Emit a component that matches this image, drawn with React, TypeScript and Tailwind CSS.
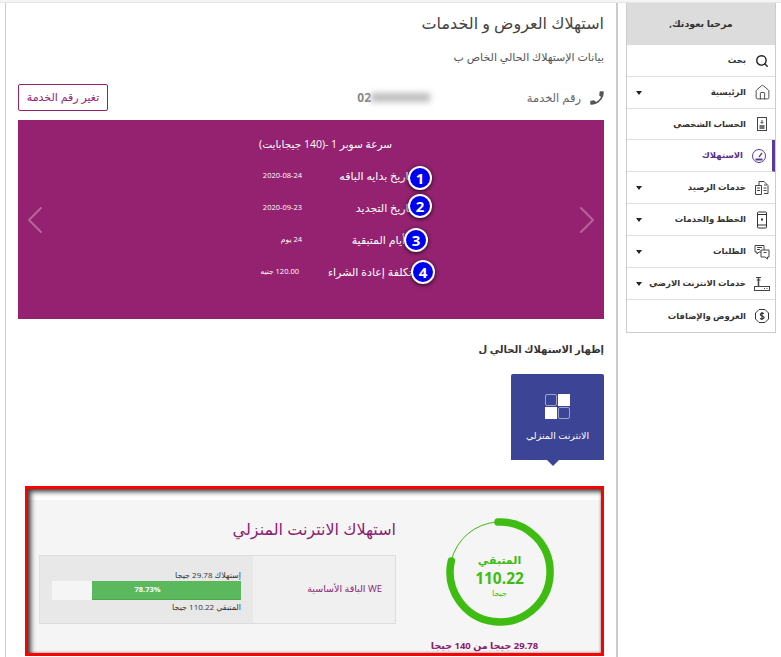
import { ChevronLeft, ChevronRight, House, Search } from 'lucide-react'
import type { ReactNode } from 'react'

const Caret = () => (
  <span className="mr-auto h-0 w-0 border-x-[3.5px] border-t-[4px] border-x-transparent border-t-[#222]" />
)

const ProfileIcon = () => (
  <svg width="14" height="16" viewBox="0 0 14 16" fill="none" stroke="#444">
    <rect x="2.500" y="1.500" width="9" height="13" />
    <path d="M7 4v3M5.500 6 7 7.500 8.500 6" />
    <path d="M4.500 10h5M4.500 12h5" strokeWidth="1.500" />
  </svg>
)

const GaugeIcon = () => (
  <svg width="16" height="16" viewBox="0 0 16 16" fill="none" stroke="#5b3a99">
    <circle cx="8" cy="8" r="6.500" />
    <path d="M8 9 11 5" strokeWidth="1.300" />
    <path d="M4.500 11.500h7" strokeWidth="2" />
  </svg>
)

const BalanceIcon = () => (
  <svg width="16" height="16" viewBox="0 0 16 16" fill="none" stroke="#444">
    <path d="M1.500 5.500h6v9h-6z" />
    <path d="M5 5V1.500h5l4 4v8h-4" />
    <path d="M3 8h3M3 10.500h3M10 5h3M9.500 8h3M9.500 10.500h3" />
  </svg>
)

const PhoneIcon = () => (
  <svg width="12" height="18" viewBox="0 0 12 18" fill="none" stroke="#333">
    <rect x="1.500" y="1" width="9" height="16" rx="1" />
    <path d="M1.500 3.500h9M1.500 14h9" />
    <rect x="5" y="7.500" width="2" height="2" fill="#333" stroke="none" />
  </svg>
)

const ChatIcon = () => (
  <svg width="16" height="16" viewBox="0 0 16 16" fill="none" stroke="#444">
    <path d="M1 1.500h9v6.500H5L3 10V8H1z" />
    <path d="M7 6h8v7h-1.500v2L11 13H7z" fill="white" />
    <path d="M3 3.500h5M3 5.500h3M9.500 8.500h3" />
  </svg>
)

const RouterIcon = () => (
  <svg width="16" height="16" viewBox="0 0 16 16" fill="none" stroke="#444">
    <rect x="0.500" y="10.500" width="15" height="4" />
    <path d="M4.500 2v8" strokeWidth="1.500" />
    <path d="M2 1.500h5M2.500 4h4" />
    <path d="M10 12.500h1M12.500 12.500h1" />
  </svg>
)

const OffersIcon = () => (
  <svg width="16" height="16" viewBox="0 0 16 16" fill="none" stroke="#333">
    <path d="M5 1.500h6L14.500 5v6L11 14.500H5L1.500 11V5z" />
    <path d="M10 5.500C8 4.500 6 5.500 6.500 7c.5 1 3 1 3.500 2.200C10.300 10.700 8 11.500 6 10.500M8 4v8" strokeWidth="1.200" />
  </svg>
)

const menu: { label: string; icon: ReactNode; caret?: boolean; active?: boolean; h: string }[] = [
  { label: 'بحث', icon: <Search size={14} strokeWidth={2.400} className="text-[#222]" />, h: 'h-[32px]' },
  { label: 'الرئيسية', icon: <House size={17} strokeWidth={1.200} className="text-[#333]" />, caret: true, h: 'h-[32px]' },
  { label: 'الحساب الشخصي', icon: <ProfileIcon />, h: 'h-[31px]' },
  { label: 'الاستهلاك', icon: <GaugeIcon />, active: true, h: 'h-[32px]' },
  { label: 'خدمات الرصيد', icon: <BalanceIcon />, caret: true, h: 'h-[32px]' },
  { label: 'الخطط والخدمات', icon: <PhoneIcon />, caret: true, h: 'h-[32px]' },
  { label: 'الطلبات', icon: <ChatIcon />, caret: true, h: 'h-[32px]' },
  { label: 'خدمات الانترنت الارضي', icon: <RouterIcon />, caret: true, h: 'h-[32px]' },
  { label: 'العروض والإضافات', icon: <OffersIcon />, h: 'h-[32px]' },
]

const bundleRows = [
  { label: 'تاريخ بدايه الباقه', labelClass: '', value: '2020-08-24', valueClass: 'mr-[2px]', badge: 1, badgeClass: 'right-[-20px] top-[6px]' },
  { label: 'تاريخ التجديد', labelClass: '', value: '2020-09-23', valueClass: 'mr-[2px]', badge: 2, badgeClass: 'right-[-20px] top-[2px]' },
  { label: 'أيام المتبقية', labelClass: 'pr-[7px]', value: '24 يوم', valueClass: 'mr-[2px]', badge: 3, badgeClass: 'right-[-16px] top-[4px]' },
  { label: 'تكلفة إعادة الشراء', labelClass: '', value: '120.00 جنيه', valueClass: 'mr-[5px]', badge: 4, badgeClass: 'right-[-23px] top-[4px]' },
]

function Sidebar() {
  return (
    <aside className="mr-[5px] w-[150px] shrink-0 border-x border-b border-[#ccc] bg-white">
      <div className="flex h-[42px] items-center justify-center bg-[#dcdcdc] text-[9.500px] font-bold text-[#333]">
        مرحبا بعودتك,
      </div>
      {menu.map((item) => (
        <div
          key={item.label}
          className={`flex items-center border-b border-[#ddd] pl-[9px] pr-[4px] last:border-b-0 ${item.h} ${
            item.active ? 'border-r-[3px] border-r-[#5b3a99]' : ''
          }`}
        >
          <span className="flex w-[18px] shrink-0 justify-center">{item.icon}</span>
          <span
            className={`mr-[7px] whitespace-nowrap text-[8.500px] font-bold ${
              item.active ? 'text-[#5a2d8c]' : 'text-[#333]'
            }`}
          >
            {item.label}
          </span>
          {item.caret && <Caret />}
        </div>
      ))}
    </aside>
  )
}

function BundlePanel() {
  return (
    <section className="relative mt-[9px] h-[199px] bg-[#952270] pt-[15px] text-white">
      <h2 className="pr-[212px] text-[10.500px] leading-[18px]">سرعة سوبر 1 -(140 جيجابايت)</h2>
      <ChevronRight size={48} strokeWidth={1} className="absolute right-[-7px] top-[76px] text-white/30" />
      <ChevronLeft size={48} strokeWidth={1} className="absolute left-[-7px] top-[76px] text-white/30" />
      <div className="mt-[7px] pr-[192px]">
        {bundleRows.map((row) => (
          <div key={row.badge} className="relative flex h-[32px] w-[152px] items-center">
            <span className={`w-[108px] shrink-0 whitespace-nowrap text-[11px] ${row.labelClass}`}>{row.label}</span>
            <span className={`whitespace-nowrap text-[7.500px] ${row.valueClass}`}>{row.value}</span>
            <span
              className={`absolute flex h-[24px] w-[24px] items-center justify-center rounded-full border-[2.500px] border-white bg-[#0000f0] text-[15px] font-bold text-white shadow-[0_1px_4px_rgba(0,0,0,0.8)] ${row.badgeClass}`}
            >
              {row.badge}
            </span>
          </div>
        ))}
      </div>
    </section>
  )
}

function InternetTile() {
  return (
    <div className="relative mt-[17px] flex h-[86px] w-[93px] flex-col items-center rounded-t-[2px] bg-[#3c4496] pt-[20px] text-white">
      <div className="grid grid-cols-2 gap-[1px]">
        <span className="h-[12px] w-[12px] bg-white" />
        <span className="h-[12px] w-[12px] rounded-[2px] border border-white/50" />
        <span className="h-[12px] w-[12px] rounded-[2px] border border-white/50" />
        <span className="h-[12px] w-[12px] bg-white" />
      </div>
      <span className="mt-[10px] whitespace-nowrap text-[9.500px]">الانترنت المنزلي</span>
      <span className="absolute bottom-[-6px] left-[36px] h-0 w-0 border-x-[6px] border-t-[6px] border-x-transparent border-t-[#3c4496]" />
    </div>
  )
}

function UsageGauge() {
  return (
    <div className="relative h-[112px] w-[112px]">
      <svg width="112" height="112" viewBox="0 0 112 112" fill="none" stroke="#3fbc12">
        <path d="M7.300 45A50 50 0 0 1 54 6" strokeWidth="1" />
        <path d="M54 6A50 50 0 1 1 7.300 45" strokeWidth="7.500" strokeLinecap="round" />
      </svg>
      <div className="absolute inset-0 flex flex-col items-center pt-[36px] text-[#3fbc12]">
        <span className="text-[11px] font-bold leading-[16px]">المتبقي</span>
        <span className="text-[15.500px] font-bold leading-[20px]">110.22</span>
        <span className="text-[8px] leading-[9px]">جيجا</span>
      </div>
    </div>
  )
}

function UsageCard() {
  return (
    <section className="mt-[26px] box-border flex h-[170px] w-[579px] border-[3px] border-[#f00] bg-[linear-gradient(#fff_11px,#f5f5f5_11px)] shadow-[inset_3px_3px_5px_rgba(0,0,0,0.7),inset_0_0_3px_rgba(0,0,0,0.4)]">
      <div className="flex w-[205px] shrink-0 flex-col items-center pl-[2px] pt-[27px]">
        <UsageGauge />
        <p className="mt-[11px] whitespace-nowrap pr-[30px] text-[9.500px] font-bold text-[#8a2070]">
          29.78 جيجا من 140 جيجا
        </p>
      </div>
      <div className="w-[357px] shrink-0 pt-[30px]">
        <h2 className="text-[16px] leading-[20px] text-[#8a2070]">استهلاك الانترنت المنزلي</h2>
        <div className="mt-[16px] flex h-[69px] border border-[#ddd]">
          <div className="flex w-[142px] shrink-0 items-center bg-[#f0f0f0] pr-[13px] text-[9.500px] text-[#8a2070]">
            WE الباقة الأساسية
          </div>
          <div className="flex-1 bg-[#e8e8e8] pl-[12px] pr-[12px] pt-[14px] text-[8px] text-[#333]">
            <p className="h-[10px] leading-[10px]">إستهلاك 29.78 جيجا</p>
            <div className="mt-[1px] flex h-[19px] bg-[#f5f5f5]">
              <div className="flex w-[149px] items-center justify-center border-b border-[#4ea64e] bg-[#5cb85c] pr-[38px] text-[7.500px] font-bold text-white">
                78.73%
              </div>
            </div>
            <p className="mt-[2px] h-[10px] leading-[10px]">المتبقي 110.22 جيجا</p>
          </div>
        </div>
      </div>
    </section>
  )
}

export default function App() {
  return (
    <div
      dir="rtl"
      className="h-[657px] w-[781px] overflow-hidden bg-white font-['Open_Sans','DejaVu_Sans',sans-serif]"
    >
      <div className="h-[3px] border-b border-[#e5e5e5] bg-[#f5f5f5]" />
      <div className="flex items-start">
        <Sidebar />
        <main className="ml-[5px] mr-[8px] h-[654px] w-[613px] shrink-0 border-l border-r-2 border-[#ccc] px-[12px] text-[#444]">
          <h1 className="mt-[9px] text-[16px] leading-[22px] text-[#444]">استهلاك العروض و الخدمات</h1>
          <p className="mt-[15px] text-[11px] leading-[16px] text-[#555]">بيانات الإستهلاك الحالي الخاص ب</p>
          <div className="mt-[19px] flex h-[27px] items-center">
            <svg width="18" height="18" viewBox="0 0 24 24" fill="#555" className="mr-[-2px] -scale-x-100">
              <path d="M6.600 10.800a15 15 0 0 0 6.600 6.600l2.200-2.200a1 1 0 0 1 1-.25 11.400 11.400 0 0 0 3.600.57 1 1 0 0 1 1 1V20a1 1 0 0 1-1 1A17 17 0 0 1 3 4a1 1 0 0 1 1-1h3.500a1 1 0 0 1 1 1c0 1.250.2 2.450.57 3.570a1 1 0 0 1-.25 1z" />
            </svg>
            <span className="mr-[7px] w-[151px] shrink-0 text-[11.500px] text-[#666]">رقم الخدمة</span>
            <span dir="ltr" className="flex items-center text-[12px] font-bold text-[#888]">
              02
              <span className="h-[9px] w-[59px] bg-[#bbb] blur-[3px]" />
            </span>
            <button className="mr-auto h-[27px] w-[90px] rounded-[2px] border border-[#952270] text-[11px] text-[#952270]">
              تغير رقم الخدمة
            </button>
          </div>
          <BundlePanel />
          <h3 className="mt-[22px] text-[10px] font-bold leading-[16px] text-[#333]">إظهار الاستهلاك الحالي ل</h3>
          <InternetTile />
          <UsageCard />
        </main>
      </div>
    </div>
  )
}
